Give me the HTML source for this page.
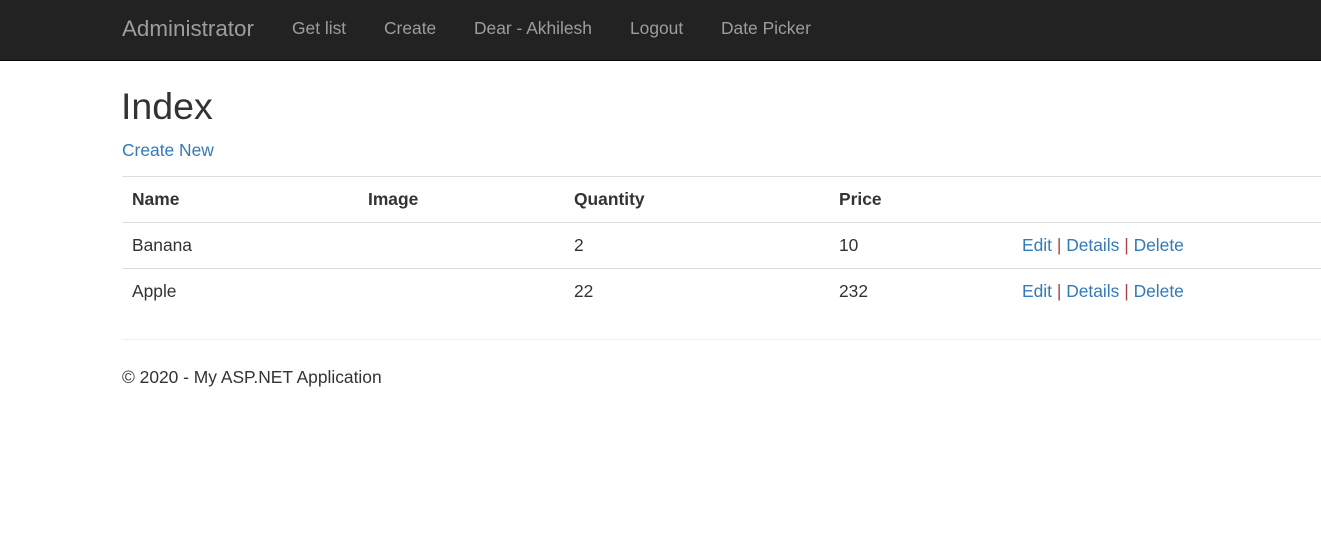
<!DOCTYPE html>
<html><head><style>
body{margin:0;width:1321px;height:542px;overflow:hidden;background:#fff;font-family:"Liberation Sans",Arial,sans-serif;color:#333;font-size:17.4px;position:relative}
.nav{position:absolute;left:0;top:0;width:1321px;height:60px;background:#222;border-bottom:1px solid #080808}
.a{position:absolute;white-space:nowrap;line-height:1}
.n{color:#9d9d9d;top:20px;font-size:17.4px}
.l{color:#337ab7}
.hr{position:absolute;left:122px;right:0;height:1px;background:#ddd}
.s{color:#a94442}
</style></head><body>
<div class="nav"></div>
<div class="a n" style="left:122px;top:18px;font-size:22.4px">Administrator</div>
<div class="a n" style="left:292px">Get list</div>
<div class="a n" style="left:384px">Create</div>
<div class="a n" style="left:474px">Dear - Akhilesh</div>
<div class="a n" style="left:630px">Logout</div>
<div class="a n" style="left:721px">Date Picker</div>
<div class="a" style="left:121px;top:88px;font-size:37.5px;color:#333">Index</div>
<div class="a l" style="left:122px;top:142px">Create New</div>
<div class="hr" style="top:176px"></div>
<div class="a" style="left:132px;top:191px;font-weight:bold">Name</div>
<div class="a" style="left:368px;top:191px;font-weight:bold">Image</div>
<div class="a" style="left:574px;top:191px;font-weight:bold">Quantity</div>
<div class="a" style="left:839px;top:191px;font-weight:bold">Price</div>
<div class="hr" style="top:222px"></div>
<div class="a" style="left:132px;top:237px">Banana</div>
<div class="a" style="left:574px;top:237px">2</div>
<div class="a" style="left:839px;top:237px">10</div>
<div class="a" style="left:1022px;top:237px"><span class="l">Edit</span> <span class="s">|</span> <span class="l">Details</span> <span class="s">|</span> <span class="l">Delete</span></div>
<div class="hr" style="top:268px"></div>
<div class="a" style="left:132px;top:283px">Apple</div>
<div class="a" style="left:574px;top:283px">22</div>
<div class="a" style="left:839px;top:283px">232</div>
<div class="a" style="left:1022px;top:283px"><span class="l">Edit</span> <span class="s">|</span> <span class="l">Details</span> <span class="s">|</span> <span class="l">Delete</span></div>
<div class="hr" style="top:339px;background:#eee"></div>
<div class="a" style="left:122px;top:369px">© 2020 - My ASP.NET Application</div>
</body></html>
